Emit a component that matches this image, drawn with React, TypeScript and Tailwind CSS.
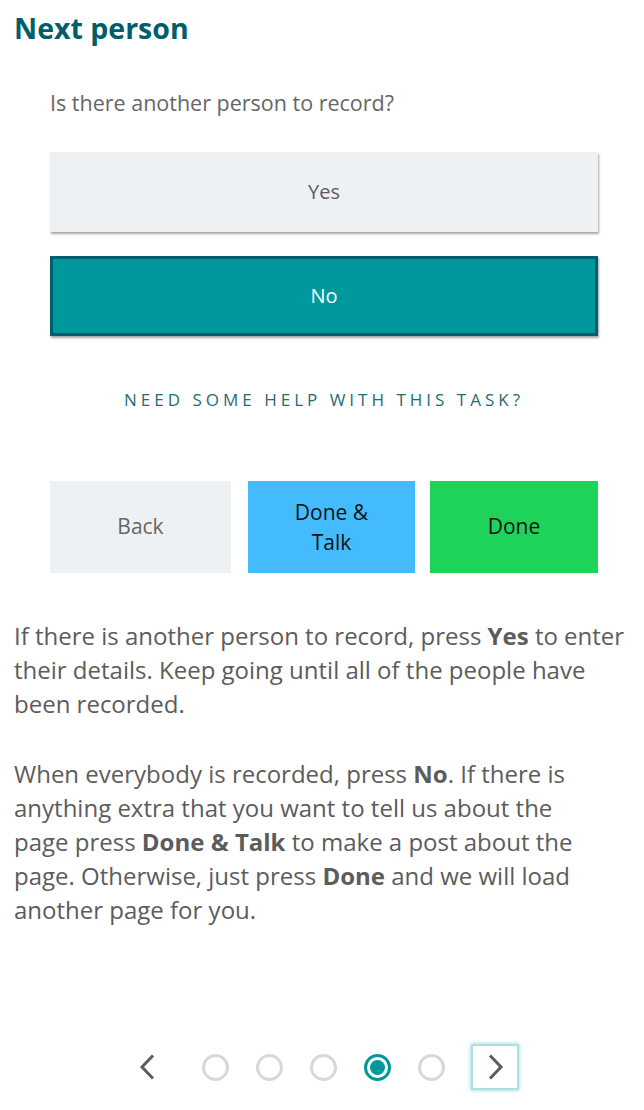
import React from "react";

const font = { fontFamily: "'Open Sans', Lato, sans-serif" };

function Dot({ active }: { active?: boolean }) {
  if (active) {
    return (
      <span className="flex h-[27px] w-[27px] items-center justify-center rounded-full border-[3px] border-[#00979d] bg-white">
        <span className="h-[15px] w-[15px] rounded-full bg-[#00979d]" />
      </span>
    );
  }
  return <span className="block h-[27px] w-[27px] rounded-full border-[3px] border-[#d8d8d8] bg-white" />;
}

export default function App() {
  return (
    <div className="min-h-[1110px] w-[644px] bg-white px-[14px] text-[#5c5c5c]" style={font}>
      <h1 className="pt-2 text-[28.5px] font-bold leading-[40px] text-[#005d69]">Next person</h1>

      <div className="pl-[36px] pr-[32px]">
        <p className="mt-[43px] text-[21.5px] leading-[24px] text-[#666]">Is there another person to record?</p>

        <button className="mt-[37px] flex h-[80px] w-full items-center justify-center bg-[#eef1f4] text-[20px] text-[#5c5c5c] shadow-[1px_2px_2px_rgba(0,0,0,0.35)]">
          Yes
        </button>
        <button className="mt-[24px] flex h-[80px] w-full items-center justify-center border-[3px] border-[#005f6b] bg-[#00979d] text-[20px] text-white shadow-[1px_2px_2px_rgba(0,0,0,0.35)]">
          No
        </button>

        <p className="mt-[52px] text-center text-[17px] leading-[24px] tracking-[4px] text-[#1f6d75]">
          NEED SOME HELP WITH THIS TASK?
        </p>

        <div className="mt-[69px] flex h-[92px]">
          <button className="flex w-[181px] items-center justify-center bg-[#eef1f4] text-[21px] text-[#666]">Back</button>
          <button className="ml-[17px] flex w-[167px] items-center justify-center bg-[#43bbfd] text-[21px] leading-[30px] text-[#111]">
            Done &amp;
            <br />
            Talk
          </button>
          <button className="ml-[15px] flex w-[168px] items-center justify-center bg-[#1ed359] text-[21px] text-[#111]">Done</button>
        </div>
      </div>

      <p className="mt-[46px] whitespace-nowrap text-[24px] leading-[34px] text-[#5c5c5c]">
        If there is another person to record, press <b>Yes</b> to enter
        <br />
        their details. Keep going until all of the people have
        <br />
        been recorded.
      </p>
      <p className="mt-[36px] whitespace-nowrap text-[24px] leading-[34px] text-[#5c5c5c]">
        When everybody is recorded, press <b>No</b>. If there is
        <br />
        anything extra that you want to tell us about the
        <br />
        page press <b>Done &amp; Talk</b> to make a post about the
        <br />
        page. Otherwise, just press <b>Done</b> and we will load
        <br />
        another page for you.
      </p>

      <div className="mt-[117px] flex items-center justify-center pl-[9px]">
        <svg width="24" height="30" viewBox="0 0 24 30" className="mr-[43px]">
          <path d="M18 3.5 L7 15 L18 26.5" fill="none" stroke="#5c5c5c" strokeWidth="3" />
        </svg>
        <div className="flex items-center gap-[27px]">
          <Dot />
          <Dot />
          <Dot />
          <Dot active />
          <Dot />
        </div>
        <div className="ml-[26px] flex h-[46px] w-[48px] items-center justify-center border-2 border-[#aee0e1] shadow-[0_0_4px_rgba(0,151,157,0.45)]">
          <svg width="24" height="30" viewBox="0 0 24 30">
            <path d="M7 3.5 L18 15 L7 26.5" fill="none" stroke="#5c5c5c" strokeWidth="3" />
          </svg>
        </div>
      </div>
    </div>
  );
}
